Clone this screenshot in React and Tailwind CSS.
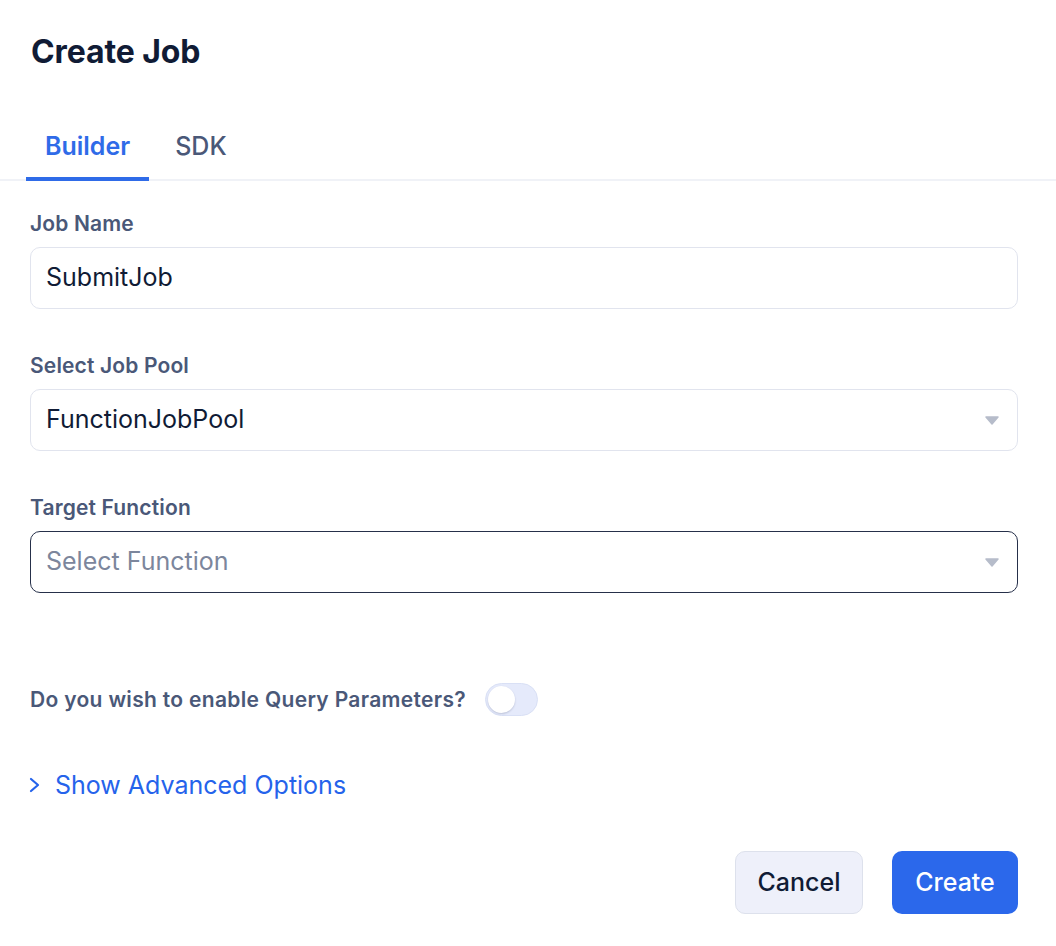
import React, { useState } from "react";

const Caret = () => (
  <svg width="14" height="9" viewBox="0 0 14 9" className="shrink-0">
    <path d="M1 1h12L7 8z" fill="#b6bcca" stroke="#b6bcca" strokeWidth="1.5" strokeLinejoin="round" />
  </svg>
);

const Label = ({ children }) => (
  <div className="text-[21px] font-semibold leading-[28px] tracking-[0.15px] text-[#4a5878]">{children}</div>
);

export default function App() {
  const [tab, setTab] = useState("builder");
  const [enabled, setEnabled] = useState(false);

  return (
    <div className="min-h-[946px] w-full bg-white font-['Inter','Noto_Sans',sans-serif] text-[#101b35]">
      {/* header */}
      <div className="pl-[31px] pt-[32px]">
        <h1 className="text-[32px] font-bold leading-[40px] tracking-[-0.1px]">Create Job</h1>
      </div>

      {/* tabs */}
      <div className="mt-[58px] flex border-b-2 border-[#f0f2f7] pl-[26px]">
        <button
          onClick={() => setTab("builder")}
          className={
            tab === "builder"
              ? "-mb-[2px] border-b-[4px] border-[#2f6be8] px-[19px] pb-[15px] text-[25px] font-semibold leading-[32px] text-[#2f6be8]"
              : "-mb-[2px] border-b-[4px] border-transparent px-[19px] pb-[15px] text-[25px] font-medium leading-[32px] text-[#4a5878]"
          }
        >
          Builder
        </button>
        <button
          onClick={() => setTab("sdk")}
          className={
            tab === "sdk"
              ? "-mb-[2px] ml-[7px] border-b-[4px] border-[#2f6be8] px-[19px] pb-[15px] text-[25px] font-semibold leading-[32px] text-[#2f6be8]"
              : "-mb-[2px] ml-[7px] border-b-[4px] border-transparent px-[19px] pb-[15px] text-[25px] font-medium leading-[32px] text-[#4a5878]"
          }
        >
          SDK
        </button>
      </div>

      {/* form */}
      <div className="pl-[30px] pr-[38px] pt-[29px]">
        <Label>Job Name</Label>
        <div className="mt-[9px] flex h-[62px] items-center rounded-[10px] border border-[#e1e4ee] px-[15px] text-[25px] text-[#101b35]">
          SubmitJob
        </div>

        <div className="mt-[43px]">
          <Label>Select Job Pool</Label>
        </div>
        <div className="mt-[9px] flex h-[62px] items-center justify-between rounded-[10px] border border-[#e1e4ee] pl-[15px] pr-[18px] text-[25px] text-[#101b35]">
          <span>FunctionJobPool</span>
          <Caret />
        </div>

        <div className="mt-[43px]">
          <Label>Target Function</Label>
        </div>
        <div className="mt-[9px] flex h-[62px] items-center justify-between rounded-[10px] border border-[#26304a] pl-[15px] pr-[18px] text-[25px] text-[#7c869c]">
          <span>Select Function</span>
          <Caret />
        </div>

        {/* toggle */}
        <div className="mt-[90px] flex items-center gap-[19px]">
          <span className="text-[21px] font-semibold leading-[28px] tracking-[0.32px] text-[#4a5878]">
            Do you wish to enable Query Parameters?
          </span>
          <button
            onClick={() => setEnabled(!enabled)}
            className={
              enabled
                ? "flex h-[33px] w-[53px] items-center justify-end rounded-full border border-[#2563eb] bg-[#2563eb] p-[2px]"
                : "flex h-[33px] w-[53px] items-center rounded-full border border-[#d9e0f5] bg-[#e5eafb] p-[2px]"
            }
          >
            <span className="h-[27px] w-[27px] rounded-full bg-white shadow-[0_1px_2px_rgba(30,41,80,0.2)]" />
          </button>
        </div>

        {/* advanced */}
        <div className="mt-[53px] flex items-center gap-[13px] text-[#2563eb]">
          <svg width="14" height="16" viewBox="0 0 14 16" className="-ml-[2px] shrink-0">
            <path d="M3 2l7 6-7 6" fill="none" stroke="#2563eb" strokeWidth="2.2" strokeLinecap="round" strokeLinejoin="round" />
          </svg>
          <span className="text-[25px] leading-[32px]">Show Advanced Options</span>
        </div>

        {/* actions */}
        <div className="mt-[50px] flex justify-end gap-[29px]">
          <button className="h-[63px] w-[128px] rounded-[10px] border border-[#dde1ec] bg-[#eef0fa] text-[25px] font-medium text-[#101b35]">
            Cancel
          </button>
          <button className="h-[63px] w-[126px] rounded-[10px] bg-[#2b68eb] text-[25px] font-medium text-white">
            Create
          </button>
        </div>
      </div>
    </div>
  );
}
